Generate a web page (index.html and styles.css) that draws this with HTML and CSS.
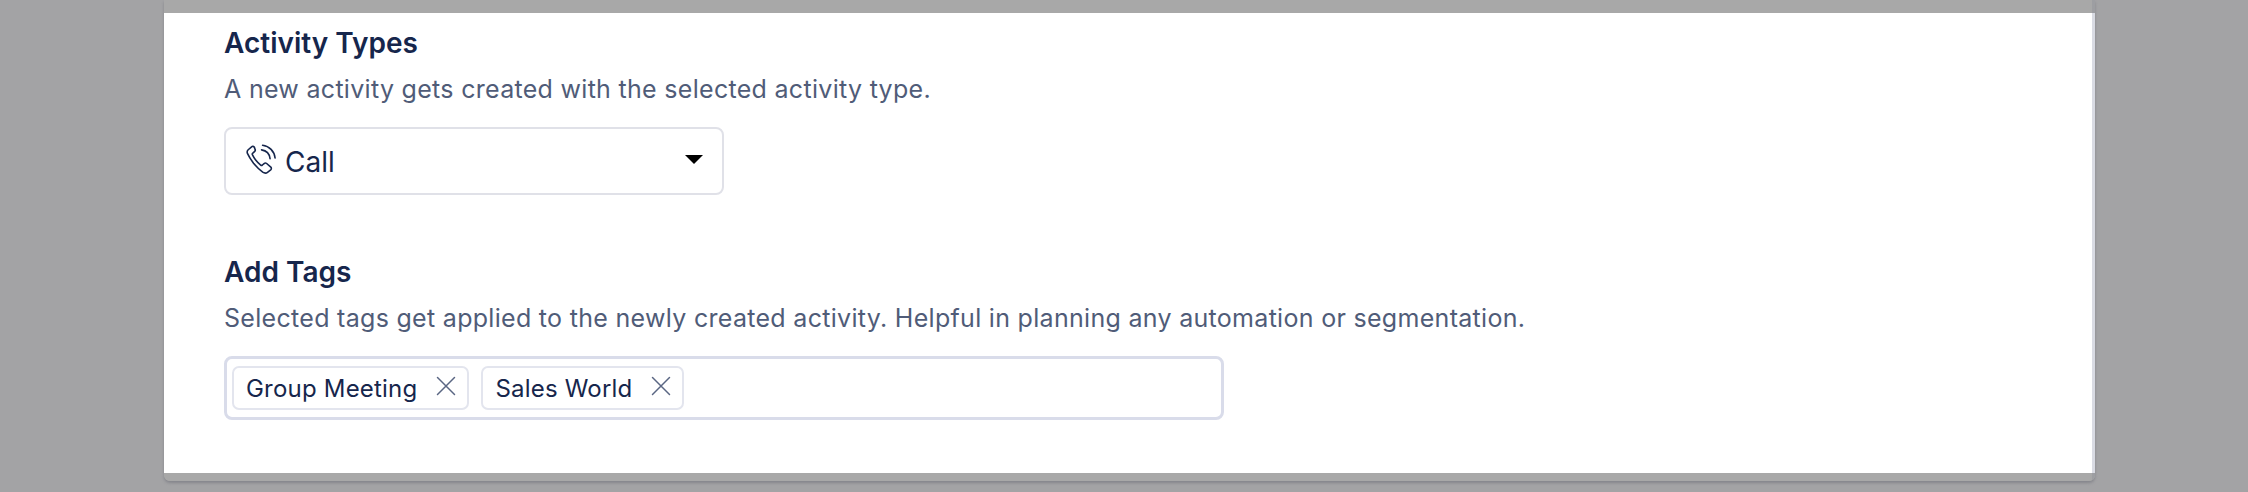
FILE: index.html
```html
<!DOCTYPE html>
<html lang="en">
<head>
<meta charset="utf-8">
<title>Activity settings</title>
<link rel="stylesheet" href="styles.css">
</head>
<body>
<div class="card">
  <div class="band band-top"></div>
  <main class="content">
    <section class="field field-activity">
      <h2 class="title">Activity Types</h2>
      <p class="desc">A new activity gets created with the selected activity type.</p>
      <div class="select">
        <svg class="phone" viewBox="0 0 30 30" fill="none" stroke="#16264c" stroke-width="1.500" stroke-linecap="round" stroke-linejoin="round">
          <path d="M6.2 2.6 3 5.4c-1 1-1.2 2.4-.6 3.7 1.2 2.7 3 5.500 5.600 8.900 3 3.600 5.600 6.200 8.600 8.400 1.500 1 3.200 1.200 4.500.2l3-2.400c.8-.7.8-1.800.1-2.500l-3.900-3.400c-.7-.6-1.700-.6-2.400 0l-1.600 1.400c-.5.400-1.100.4-1.600 0-1.700-1.400-3.300-3-4.700-4.800-1.300-1.600-2.300-3.200-3.100-4.900-.2-.5-.1-1.100.4-1.500l1.600-1.400c.7-.6.900-1.600.4-2.400L8.800 3c-.6-.9-1.800-1.100-2.600-.4Z"/>
          <path d="M15.500 5.500c4.300.6 7.500 3.800 8 8.300"/>
          <path d="M16.500 1.200c6.300.8 11 5.500 11.700 11.900"/>
        </svg>
        <span class="select-value">Call</span>
        <span class="caret"></span>
      </div>
    </section>
    <section class="field">
      <h2 class="title">Add Tags</h2>
      <p class="desc">Selected tags get applied to the newly created activity. Helpful in planning any automation or segmentation.</p>
      <div class="tags">
        <span class="tag">Group Meeting
          <svg class="x" viewBox="0 0 20 20" fill="none" stroke="#5a6683" stroke-width="1.500" stroke-linecap="round"><path d="M1.500 1.500 18.500 18.500M18.500 1.500 1.500 18.500"/></svg>
        </span>
        <span class="tag">Sales World
          <svg class="x" viewBox="0 0 20 20" fill="none" stroke="#5a6683" stroke-width="1.500" stroke-linecap="round"><path d="M1.500 1.500 18.500 18.500M18.500 1.500 1.500 18.500"/></svg>
        </span>
      </div>
    </section>
  </main>
  <div class="band band-bottom"></div>
</div>
</body>
</html>
```
FILE: styles.css
```css
* { box-sizing: border-box; }
html, body { margin: 0; height: 492px; overflow: hidden; }
body {
  background: #a3a3a5;
  font-family: Inter, "Liberation Sans", sans-serif;
  padding-left: 164px;
}
.card {
  width: 1931px;
  height: 481px;
  display: flex;
  flex-direction: column;
  border-radius: 0 0 6px 6px;
  box-shadow: 0 2px 3px #85868c;
  overflow: hidden;
  background: #a8a8a8;
}
.band {
  background: #a8a8a8;
  flex: none;
  border-right: 3px solid #9d9ea2;
}
.band-top { height: 13px; }
.band-bottom { height: 8px; }
.content {
  flex: 1;
  background: #fff;
  padding: 13px 60px 0;
  border-right: 3px solid #d9dbe3;
}
.field-activity { margin-bottom: 60px; }
.title {
  margin: 0;
  font-size: 28px;
  line-height: 34px;
  font-weight: 600;
  color: #16264c;
}
.desc {
  margin: 11px 0 0;
  font-size: 25px;
  line-height: 36px;
  letter-spacing: 0.3px;
  color: #505c78;
}
.select {
  margin-top: 20px;
  width: 500px;
  height: 68px;
  border: 2px solid #e0e1e8;
  border-radius: 8px;
  display: flex;
  align-items: center;
  padding: 2px 19px 0 19px;
  color: #16264c;
  font-size: 28px;
}
.phone { width: 32px; height: 32px; flex: none; margin: -4px 8px 0 0; }
.select-value { flex: 1; }
.caret {
  width: 0; height: 0;
  border-left: 9px solid transparent;
  border-right: 9px solid transparent;
  border-top: 9px solid #000;
  margin-top: -6px;
}
.tags {
  margin-top: 20px;
  width: 1000px;
  height: 64px;
  border: 3px solid #d9dcea;
  border-radius: 8px;
  display: flex;
  align-items: center;
  gap: 12px;
  padding: 0 5px;
}
.tag {
  height: 44px;
  border: 2px solid #e3e5ee;
  border-radius: 7px;
  display: inline-flex;
  align-items: center;
  gap: 19px;
  padding: 0 11px 0 12px;
  font-size: 24px;
  letter-spacing: 0.2px;
  color: #16264c;
}
.x { width: 20px; height: 20px; flex: none; margin-top: -4px; }
```
